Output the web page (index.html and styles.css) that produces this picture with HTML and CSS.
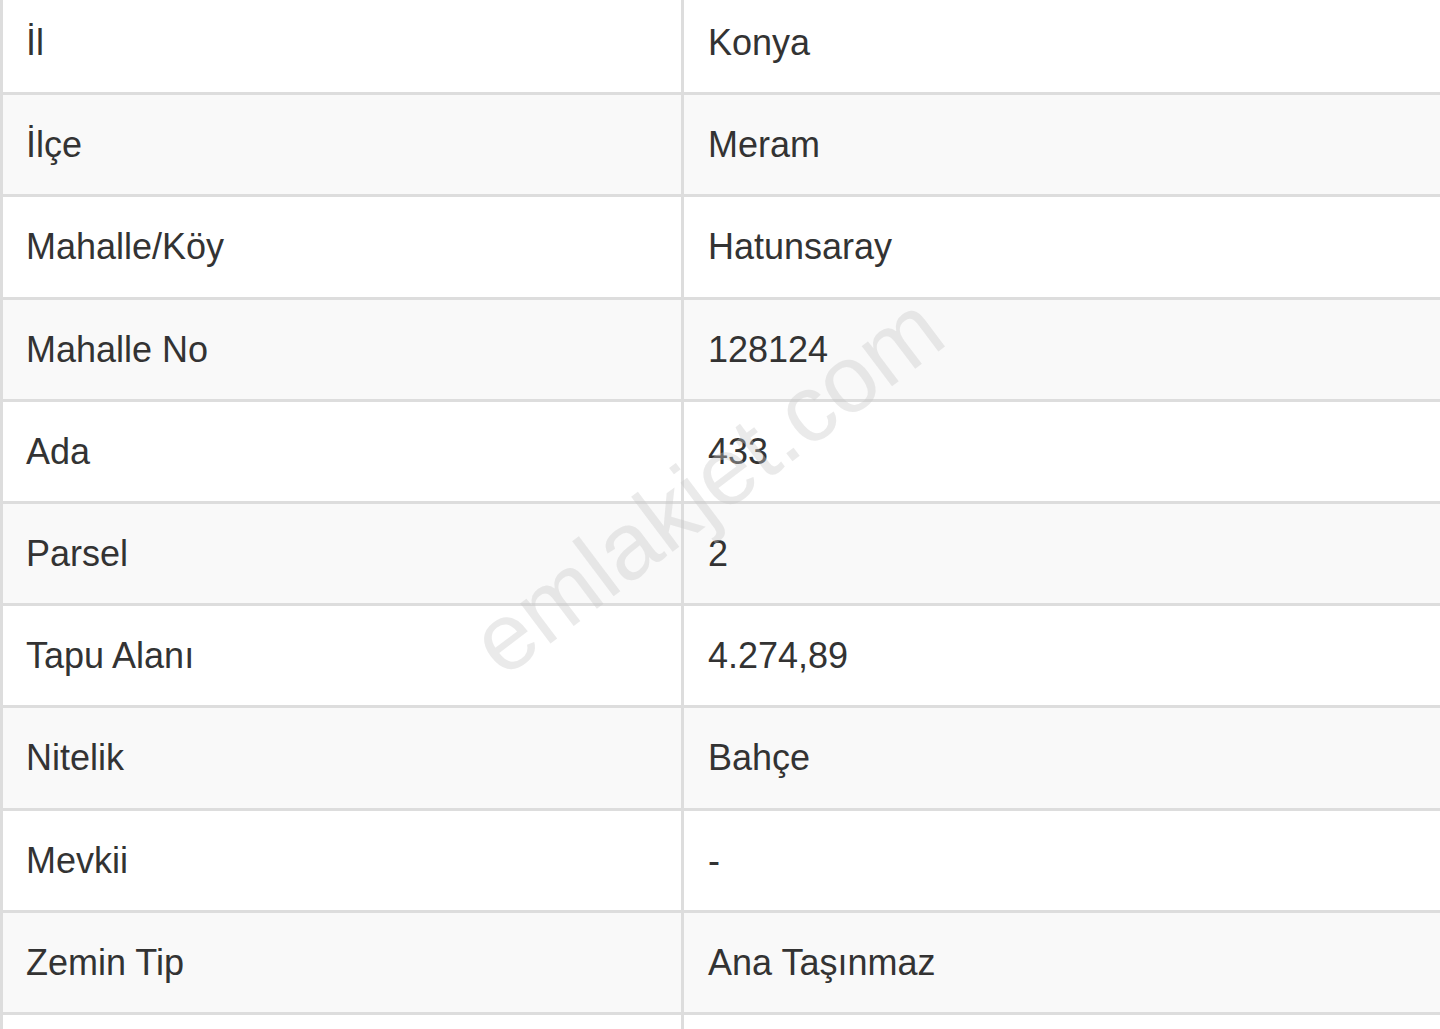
FILE: index.html
```html
<!DOCTYPE html>
<html lang="tr">
<head>
<meta charset="utf-8">
<title>Tapu Bilgileri</title>
<link rel="stylesheet" href="styles.css">
</head>
<body>
<div class="wrap">
<table class="info">
<tbody>
<tr><td class="k">İl</td><td class="v">Konya</td></tr>
<tr><td class="k">İlçe</td><td class="v">Meram</td></tr>
<tr><td class="k">Mahalle/Köy</td><td class="v">Hatunsaray</td></tr>
<tr><td class="k">Mahalle No</td><td class="v">128124</td></tr>
<tr><td class="k">Ada</td><td class="v">433</td></tr>
<tr><td class="k">Parsel</td><td class="v">2</td></tr>
<tr><td class="k">Tapu Alanı</td><td class="v">4.274,89</td></tr>
<tr><td class="k">Nitelik</td><td class="v">Bahçe</td></tr>
<tr><td class="k">Mevkii</td><td class="v">-</td></tr>
<tr><td class="k">Zemin Tip</td><td class="v">Ana Taşınmaz</td></tr>
<tr><td class="k">&nbsp;</td><td class="v">&nbsp;</td></tr>
</tbody>
</table>
<div class="watermark">emlakjet.com</div>
</div>
</body>
</html>
```
FILE: styles.css
```css
html, body {
  margin: 0;
  padding: 0;
  background: #ffffff;
  overflow: hidden;
}
body {
  width: 1440px;
  height: 1029px;
  font-family: "Liberation Sans", Arial, sans-serif;
  color: #333333;
}
.wrap {
  position: relative;
  width: 1443px;
}
.info {
  width: 1443px;
  margin-top: -7px;
  border-collapse: separate;
  border-spacing: 0;
  table-layout: fixed;
  font-size: 36px;
  line-height: 51.2px;
}
.info td {
  box-sizing: border-box;
  padding: 24px 24px 24px 23px;
  border-bottom: 3px solid #dddddd;
  border-left: 3px solid #dddddd;
  vertical-align: top;
  white-space: nowrap;
}
.info td.k {
  width: 681px;
}
.info td.v {
  padding-left: 24px;
  border-right: 3px solid #dddddd;
}
.info tr:nth-child(even) td {
  background: #f9f9f9;
}
.watermark {
  position: absolute;
  left: 707px;
  top: 492px;
  transform: translate(-50%, -50%) rotate(-37deg);
  font-size: 95px;
  line-height: 1;
  color: rgba(200, 200, 200, 0.38);
  white-space: nowrap;
  pointer-events: none;
}
```
